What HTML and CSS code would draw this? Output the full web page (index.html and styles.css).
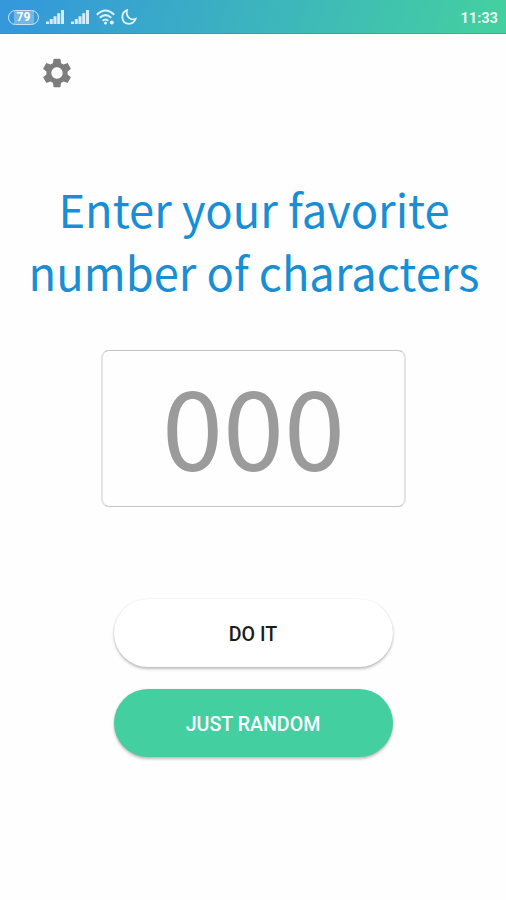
FILE: index.html
```html
<!DOCTYPE html>
<html lang="en">
<head>
    <meta charset="UTF-8">
    <meta name="viewport" content="width=device-width, initial-scale=1.0">
    <title>Favorite Number</title>
    <link rel="stylesheet" href="styles.css">
</head>
<body>
    <header class="status-bar">
        <div class="status-icons">
            <span class="battery"><span class="battery-level">79</span></span>
            <svg class="signal" viewBox="0 0 18 14" width="18" height="14">
                <path d="M0 11.500h3V14H0zM3.800 9h3v5h-3zM7.500 6.300h3V14h-3zM11.200 3.300h3V14h-3zM15 0h3v14h-3z"/>
            </svg>
            <svg class="signal" viewBox="0 0 18 14" width="18" height="14">
                <path d="M0 11.500h3V14H0zM3.800 9h3v5h-3zM7.500 6.300h3V14h-3zM11.200 3.300h3V14h-3zM15 0h3v14h-3z"/>
            </svg>
            <svg class="wifi" viewBox="0 0 20 16" width="20" height="16">
                <path d="M.8 5.800Q9.500-2.800 18.200 5.800M3.800 8.800q5.700-5.400 11.400 0M6.600 11.800q2.900-2.700 5.800 0"/>
                <circle cx="9.500" cy="14" r="1.500"/>
                <circle cx="15.800" cy="13.400" r="2"/>
            </svg>
            <svg class="moon" viewBox="0 0 16 16" width="16" height="16">
                <path d="M6 1.200C-1 4.200.2 14.700 8 14.800c3.200 0 5.600-2 6.600-5C9.500 12 4.400 7.400 6 1.200z"/>
            </svg>
        </div>
        <span class="clock">11:33</span>
    </header>

    <main class="container">
        <button class="settings" aria-label="Settings">
            <svg viewBox="0 0 24 24" width="34" height="34">
                <path d="M19.430 12.980c.04-.32.07-.64.07-.98s-.03-.66-.07-.98l2.110-1.650c.19-.15.24-.42.12-.64l-2-3.460c-.12-.22-.39-.3-.61-.22l-2.490 1c-.52-.4-1.080-.73-1.690-.98l-.38-2.650C14.460 2.180 14.250 2 14 2h-4c-.25 0-.46.18-.49.42l-.38 2.650c-.61.25-1.170.59-1.690.98l-2.490-1c-.23-.09-.49 0-.61.22l-2 3.460c-.13.22-.07.49.12.64l2.110 1.650c-.04.32-.07.65-.07.98s.03.66.07.98l-2.110 1.650c-.19.15-.24.42-.12.64l2 3.460c.12.22.39.3.61.22l2.490-1c.52.4 1.080.73 1.690.98l.38 2.650c.03.24.24.42.49.42h4c.25 0 .46-.18.49-.42l.38-2.650c.61-.25 1.170-.59 1.690-.98l2.490 1c.23.09.49 0 .61-.22l2-3.460c.12-.22.07-.49-.12-.64l-2.110-1.650zM12 16c-2.200 0-4-1.800-4-4s1.800-4 4-4 4 1.800 4 4-1.800 4-4 4z"/>
            </svg>
        </button>

        <h1>Enter your favorite<br>number of characters</h1>

        <input type="text" class="number-input" placeholder="000" maxlength="3" inputmode="numeric" aria-label="Number of characters">

        <div class="buttons">
            <button class="btn">DO IT</button>
            <button class="btn random">JUST RANDOM</button>
        </div>
    </main>
</body>
</html>
```
FILE: styles.css
```css
* {
    box-sizing: border-box;
}

body {
    font-family: Roboto, sans-serif;
    background-color: #fefefe;
    margin: 0;
    height: 100vh;
    overflow: hidden;
}

.status-bar {
    display: flex;
    justify-content: space-between;
    align-items: center;
    height: 34px;
    padding: 0 8px;
    background: linear-gradient(110deg, #3498db 3%, #44cfa1 97%);
    box-shadow: inset 0 -1px rgba(0, 160, 200, 0.5);
    color: rgba(255, 255, 255, 0.9);
}

.status-icons {
    display: flex;
    align-items: center;
}

.battery {
    display: flex;
    justify-content: center;
    width: 31px;
    height: 15px;
    margin-right: 7px;
    border: 1.5px solid rgba(255, 255, 255, 0.75);
    border-radius: 8px;
}

.battery-level {
    width: 20px;
    background-color: rgba(255, 255, 255, 0.3);
    color: #fff;
    font-size: 12px;
    font-weight: 700;
    line-height: 13px;
    text-align: center;
}

.signal {
    margin-right: 7px;
    fill: rgba(255, 255, 255, 0.8);
}

.wifi {
    margin-right: 5px;
    fill: rgba(255, 255, 255, 0.85);
}

.wifi path {
    fill: none;
    stroke: rgba(255, 255, 255, 0.85);
    stroke-width: 2;
}

.moon {
    fill: none;
    stroke: rgba(255, 255, 255, 0.85);
    stroke-width: 1.8;
}

.clock {
    padding-top: 1px;
    font-size: 14.6px;
    font-weight: 700;
}

.container {
    display: flex;
    flex-direction: column;
    align-items: center;
}

.settings {
    display: flex;
    align-self: flex-start;
    margin: 22px 0 0 40px;
    padding: 0;
    border: none;
    background: none;
    fill: #7d7d7d;
    cursor: pointer;
}

h1 {
    margin: 87px 0 0;
    padding-left: 2px;
    color: #188fd5;
    font-family: "Noto Sans CJK SC", sans-serif;
    font-size: 45.3px;
    font-weight: 400;
    line-height: 63px;
    text-align: center;
    white-space: nowrap;
}

.number-input {
    width: 305px;
    height: 157px;
    margin: 47px 0 0 1px;
    padding: 0 0 11px;
    border: 2px solid #e3e3e3;
    border-top: 1px solid #c4c4c4;
    border-bottom: 1px solid #c4c4c4;
    border-radius: 8px;
    background-color: #fefefe;
    color: #9b9b9b;
    font-family: "Noto Sans CJK SC", sans-serif;
    font-size: 110px;
    line-height: 140px;
    text-align: center;
    outline: none;
}

.number-input::placeholder {
    color: #9b9b9b;
}

.buttons {
    display: flex;
    flex-direction: column;
    gap: 22px;
    margin-top: 92px;
}

.btn {
    width: 279px;
    height: 68px;
    padding: 2px 0 0;
    border: none;
    border-radius: 34px;
    background-color: #fff;
    box-shadow: 0 2px 3px rgba(0, 0, 0, 0.25), 0 0 2px rgba(0, 0, 0, 0.08);
    color: #1c1c1c;
    font-family: Roboto, sans-serif;
    font-size: 19.6px;
    font-weight: 500;
    cursor: pointer;
}

.btn.random {
    background-color: #44cfa1;
    color: #fff;
}
```
